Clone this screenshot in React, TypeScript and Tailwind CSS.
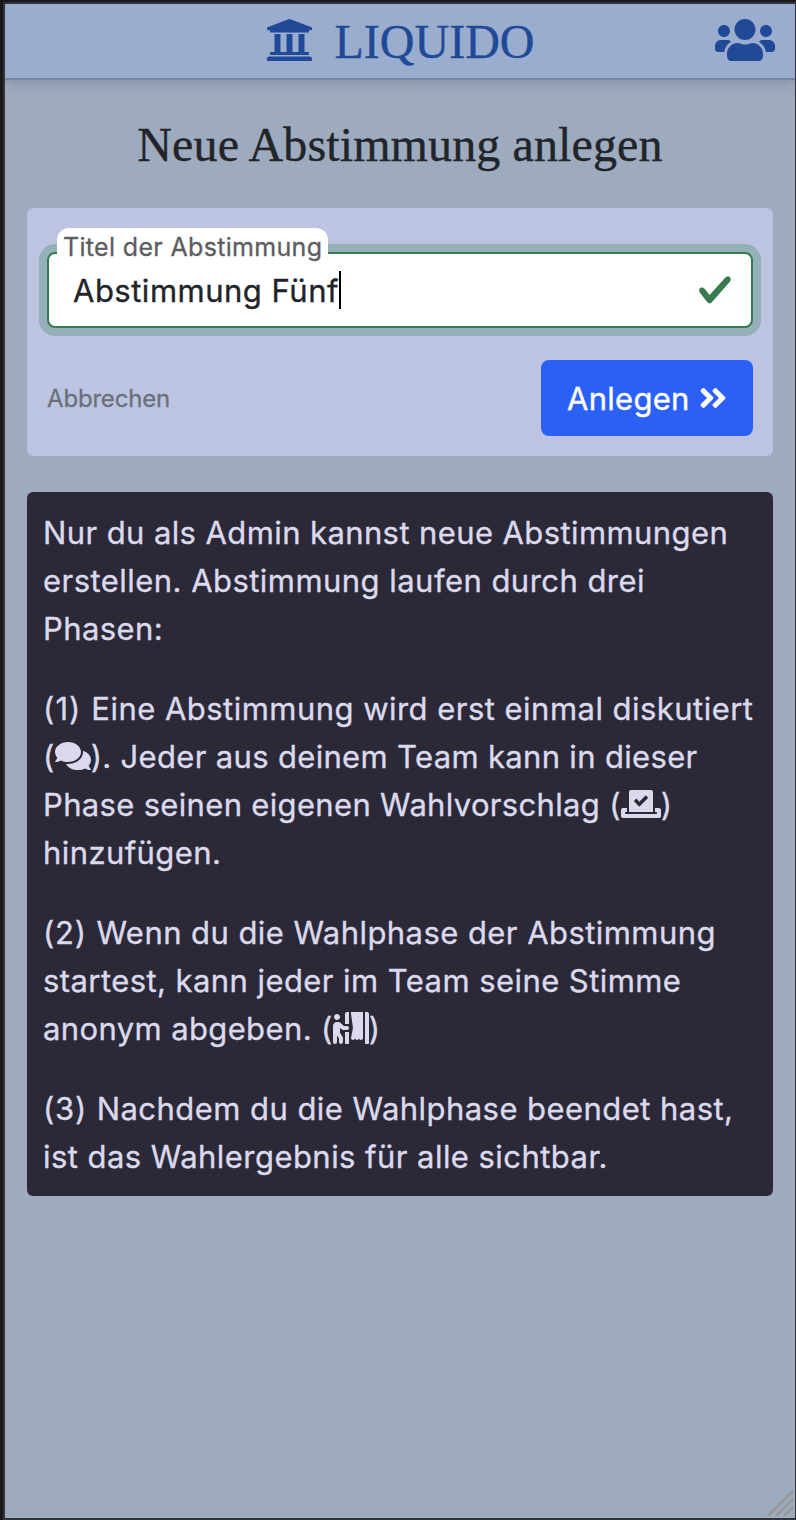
import type { ReactNode } from "react";
import { FaAngleDoubleRight, FaComments, FaPersonBooth, FaUniversity, FaUsers, FaVoteYea } from "react-icons/fa";

function Line({ className, children }: { className: string; children: ReactNode }) {
  return <span className={`block h-12 whitespace-pre ${className}`}>{children}</span>;
}

function Header() {
  return (
    <header className="grid h-[76px] shrink-0 grid-cols-[1fr_auto_1fr] items-center border-b-2 border-[#7688a3] bg-[#9aadce] px-5 text-[#204a97] shadow-[0_4px_10px_rgba(60,70,90,0.22)]">
      <span />
      <div className="flex items-center gap-[21px]">
        <FaUniversity className="h-12 w-12 -translate-x-[0.5px] -translate-y-px" />
        <span className="pt-0.5 font-['Liberation_Serif',serif] text-5xl leading-[72px] [-webkit-text-stroke:0.4px]">LIQUIDO</span>
      </div>
      <FaUsers className="h-12 w-[60px] -translate-y-px justify-self-end" />
    </header>
  );
}

function PollForm() {
  return (
    <form className="mt-[35px] h-[248px] rounded-md bg-[#bdc4e1] px-5 pt-11">
      <div className="relative flex h-[76px] items-center justify-between rounded-lg border-2 border-[#367c50] bg-white pl-6 pr-[18px] ring-8 ring-[#94b0b8]">
        <label className="absolute -top-[26px] left-2 h-10 w-[271px] rounded-t-xl bg-white pl-1.5 text-[25px] leading-[38px] tracking-[0.33px] whitespace-nowrap text-[#5c5d60] [-webkit-text-stroke:0.3px]">
          Titel der Abstimmung
        </label>
        <div className="flex items-center text-[31px] leading-9 tracking-[0.5px] text-[#212529]">
          <span className="pt-0.5 [-webkit-text-stroke:0.35px]">Abstimmung Fünf</span>
          <span className="h-[38px] w-0.5 bg-black" />
        </div>
        <svg className="h-9 w-9" viewBox="0 0 8 8" fill="#367c50">
          <path d="M2.3 6.73.6 4.53c-.4-1.04.46-1.4 1.1-.8l1.1 1.4 3.4-3.8c.6-.63 1.6-.27 1.2.7l-4 4.6c-.43.5-.8.4-1.1.1z" />
        </svg>
      </div>
      <div className="mt-8 flex h-[76px] items-center justify-between">
        <button type="button" className="pt-0.5 text-2xl tracking-[-0.18px] text-[#6a717b] [-webkit-text-stroke:0.3px]">Abbrechen</button>
        <button type="button" className="flex h-[76px] w-[212px] items-center gap-[9px] rounded-lg bg-[#2b60f6] pl-[26px] text-[31px] text-white">
          <span className="pt-0.5 tracking-[0.29px] [-webkit-text-stroke:0.4px]">Anlegen</span>
          <FaAngleDoubleRight className="h-8 w-7" />
        </button>
      </div>
    </form>
  );
}

function Explanation() {
  return (
    <section className="mt-9 flex flex-col gap-8 rounded-md bg-[#2b2937] px-4 pb-[15px] pt-[17px] text-[31px] leading-[48px] text-[#dbd9ec] [-webkit-text-stroke:0.35px]">
      <p>
        <Line className="tracking-[0.4px]">Nur du als Admin kannst neue Abstimmungen</Line>
        <Line className="tracking-[0.46px]">erstellen. Abstimmung laufen durch drei</Line>
        <Line className="tracking-[0.4px]">Phasen:</Line>
      </p>
      <p>
        <Line className="tracking-[0.47px]">
          <span className="tracking-[1.1px]">(1) </span>Eine Abstimmung wird erst einmal diskutiert
        </Line>
        <Line className="tracking-[0.33px]">
          (<FaComments className="inline-block h-8 w-9 align-[-4px]" />). Jeder aus deinem Team kann in dieser
        </Line>
        <Line className="tracking-[0.33px]">
          Phase seinen eigenen Wahlvorschlag (<FaVoteYea className="inline-block h-8 w-10 align-[-4px]" />)
        </Line>
        <Line className="tracking-[0.42px]">hinzufügen.</Line>
      </p>
      <p>
        <Line className="tracking-[0.44px]">
          <span className="tracking-[0.8px]">(2) </span>Wenn du die Wahlphase der Abstimmung
        </Line>
        <Line className="tracking-[0.43px]">startest, kann jeder im Team seine Stimme</Line>
        <Line className="tracking-[0.38px]">
          anonym abgeben. (<FaPersonBooth className="inline-block h-8 w-9 align-[-4px]" />)
        </Line>
      </p>
      <p>
        <Line className="tracking-[0.45px]">
          <span className="tracking-[0.8px]">(3) </span>Nachdem du die Wahlphase beendet hast,
        </Line>
        <Line className="tracking-[0.45px]">ist das Wahlergebnis für alle sichtbar.</Line>
      </p>
    </section>
  );
}

export default function App() {
  return (
    <div className="h-[1520px] w-[796px] bg-[#18181a] pl-[3px] pt-0.5 font-['Inter',sans-serif]">
      <div className="h-full bg-[#343438] pb-0.5 pl-0.5 pr-px pt-0.5">
        <div className="relative flex h-[1514px] flex-col overflow-hidden bg-[#9eabbe]">
          <Header />
          <main className="px-[22px] pt-9">
            <h1 className="text-center font-['Liberation_Serif',serif] text-5xl leading-[57px] tracking-[0.12px] text-[#212529] [-webkit-text-stroke:0.4px]">
              Neue Abstimmung anlegen
            </h1>
            <PollForm />
            <Explanation />
          </main>
          <svg className="absolute bottom-0.5 right-0.5 h-[26px] w-[26px]" viewBox="0 0 26 26" stroke="#959798" strokeWidth="2.5">
            <path d="M1 26 26 1M9 26 26 9M17 26 26 17" />
          </svg>
        </div>
      </div>
    </div>
  );
}
